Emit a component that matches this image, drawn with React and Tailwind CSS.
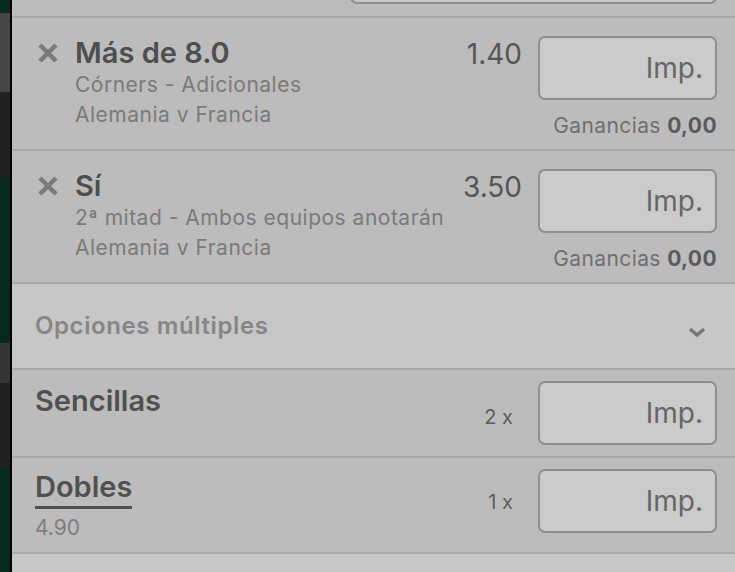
import { useState } from 'react';

const font = { fontFamily: 'Inter, "Noto Sans", sans-serif' };

const bets = [
  { id: 1, pick: 'Más de 8.0', market: 'Córners - Adicionales', event: 'Alemania v Francia', odds: '1.40' },
  { id: 2, pick: 'Sí', market: '2ª mitad - Ambos equipos anotarán', event: 'Alemania v Francia', odds: '3.50' },
];

const StakeInput = ({ className = '' }) => (
  <div
    className={`h-[64px] rounded-[7px] border-2 border-[#8f8f8f] bg-[#cbcbcb] flex items-center justify-end pr-[12px] text-[28px] text-[#666] ${className}`}
  >
    Imp.
  </div>
);

const Cross = () => (
  <svg width="22" height="22" viewBox="0 0 22 22" className="shrink-0">
    <path d="M3 3 L19 19 M19 3 L3 19" stroke="#7a7a7a" strokeWidth="4.5" strokeLinecap="butt" />
  </svg>
);

const BetRow = ({ bet }) => (
  <div className="h-[133px] flex border-b-2 border-[#a9a9a9] pt-[18px] pr-[18px]">
    <div className="w-[63px] pl-[25px] pt-[6px]">
      <Cross />
    </div>
    <div className="flex-1 min-w-0">
      <div className="text-[29px] leading-[34px] font-semibold text-[#4e4e4e]">{bet.pick}</div>
      <div className="text-[21px] leading-[30px] text-[#7a7a7a] tracking-[0.5px] whitespace-nowrap">{bet.market}</div>
      <div className="text-[21px] leading-[30px] text-[#7a7a7a] tracking-[0.5px]">{bet.event}</div>
    </div>
    <div className="text-[28px] leading-[34px] text-[#555] pr-[16px] pt-[1px]">{bet.odds}</div>
    <div className="w-[179px] flex flex-col items-end">
      <StakeInput className="w-full" />
      <div className="mt-[11px] text-[21px] leading-[30px] tracking-[0.4px] text-[#6f6f6f] whitespace-nowrap">
        Ganancias <span className="font-bold text-[#5a5a5a]">0,00</span>
      </div>
    </div>
  </div>
);

const stripe = [
  ['h-[13px]', 'bg-[#07291e]'],
  ['h-[79px]', 'bg-[#474747]'],
  ['h-[85px]', 'bg-[#212121]'],
  ['h-[166px]', 'bg-[#07291e]'],
  ['h-[40px]', 'bg-[#343434]'],
  ['h-[84px]', 'bg-[#212121]'],
  ['h-[105px]', 'bg-[#07291e]'],
];

export default function App() {
  const [open, setOpen] = useState(false);

  return (
    <div className="w-[735px] h-[572px] overflow-hidden flex bg-[#bcbcbc]" style={font}>
      {/* left edge of the page behind */}
      <div className="w-[10px] flex flex-col shrink-0">
        {stripe.map(([h, bg], i) => (
          <div key={i} className={`${h} ${bg} shrink-0`} />
        ))}
      </div>
      <div className="w-[2px] bg-black shrink-0" />

      <div className="flex-1 flex flex-col">
        {/* previous row, cut off */}
        <div className="h-[18px] border-b-2 border-[#a9a9a9] flex justify-end pr-[18px] overflow-hidden">
          <div className="w-[367px] h-[40px] -mt-[36px] rounded-[7px] border-2 border-[#8f8f8f] bg-[#cbcbcb] shrink-0" />
        </div>

        {bets.map((bet) => (
          <BetRow key={bet.id} bet={bet} />
        ))}

        {/* Opciones múltiples */}
        <button
          onClick={() => setOpen(!open)}
          className="h-[86px] bg-[#c7c7c7] border-b-2 border-[#a9a9a9] flex items-center justify-between pl-[23px] pr-[28px] text-left"
        >
          <span className="text-[24px] font-semibold text-[#868686] tracking-[0.6px]">Opciones múltiples</span>
          <svg width="20" height="12" viewBox="0 0 20 12" className="mt-[12px]">
            <path d="M3 3 L10 9 L17 3" fill="none" stroke="#777" strokeWidth="3.5" />
          </svg>
        </button>

        {/* Sencillas */}
        <div className="h-[88px] border-b-2 border-[#a9a9a9] flex pl-[23px] pr-[18px] pt-[11px]">
          <div className="flex-1 text-[29px] leading-[36px] font-semibold text-[#505050] pt-[2px]">Sencillas</div>
          <div className="text-[20px] text-[#5c5c5c] pr-[25px] self-center -mt-[4px]">2 x</div>
          <StakeInput className="w-[179px]" />
        </div>

        {/* Dobles */}
        <div className="h-[96px] border-b-2 border-[#a9a9a9] flex pl-[23px] pr-[18px] pt-[11px]">
          <div className="flex-1">
            <div className="inline-block text-[29px] leading-[36px] font-semibold text-[#505050] border-b-[3px] border-[#505050] pb-[1px]">
              Dobles
            </div>
            <div className="text-[21px] leading-[28px] text-[#7e7e7e] pt-[5px]">4.90</div>
          </div>
          <div className="text-[20px] text-[#5c5c5c] pr-[25px] self-start pt-[18px]">1 x</div>
          <StakeInput className="w-[179px]" />
        </div>

        <div className="flex-1 bg-[#c7c7c7]" />
      </div>
    </div>
  );
}
